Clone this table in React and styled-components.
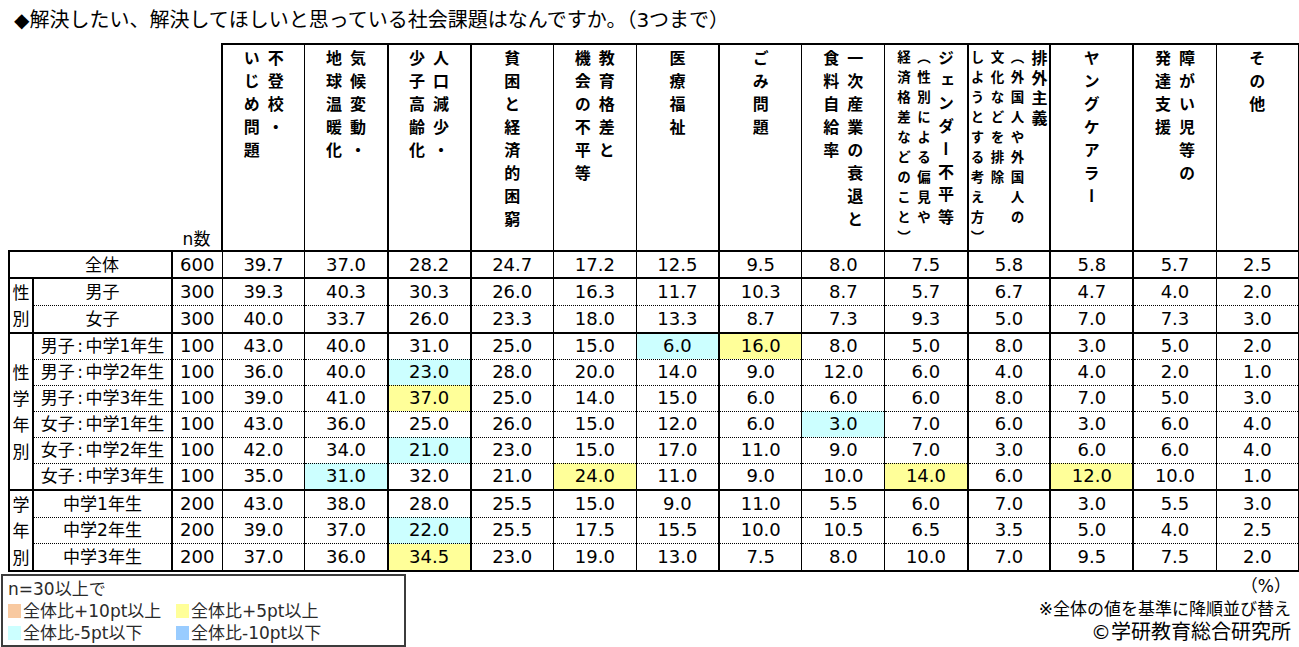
import React from 'react'
import styled, { createGlobalStyle } from 'styled-components'

const GlobalStyle = createGlobalStyle`
  html, body {
    margin: 0;
    padding: 0;
    background: #fff;
  }
  body {
    font-family: "DejaVu Sans", "Noto Sans CJK JP", sans-serif;
    color: #000;
  }
`

const THICK = '2px solid #000'
const THIN = '1px solid #000'
const DOT = '1px dotted #000'

const tones = {
  up10: '#f8c9a0',
  up5: '#ffff99',
  down5: '#ccffff',
  down10: '#99ccff',
}

// 横書きに直すと: 不登校・いじめ問題 など。lines は右の行から順に
const columns = [
  { key: 'futoko', thick: false, lines: [{ t: '不登校・' }, { t: 'いじめ問題' }] },
  { key: 'kiko', thick: true, lines: [{ t: '気候変動・' }, { t: '地球温暖化' }] },
  { key: 'jinko', thick: true, lines: [{ t: '人口減少・' }, { t: '少子高齢化' }] },
  { key: 'hinkon', thick: false, lines: [{ t: '貧困と経済的困窮' }] },
  { key: 'kyoiku', thick: false, lines: [{ t: '教育格差と' }, { t: '機会の不平等' }] },
  { key: 'iryo', thick: true, lines: [{ t: '医療福祉' }] },
  { key: 'gomi', thick: false, lines: [{ t: 'ごみ問題' }] },
  { key: 'ichiji', thick: false, lines: [{ t: '一次産業の衰退と' }, { t: '食料自給率' }] },
  {
    key: 'gender',
    thick: true,
    lines: [
      { t: 'ジェンダー不平等', pitch: 22.7 },
      { t: '（性別による偏見や', small: true },
      { t: '経済格差などのこと）', small: true },
    ],
  },
  {
    key: 'haigai',
    thick: true,
    lines: [
      { t: '排外主義', pitch: 20, w: 23 },
      { t: '（外国人や外国人の', small: true },
      { t: '文化などを排除', small: true },
      { t: 'しようとする考え方）', small: true },
    ],
  },
  { key: 'young', thick: true, lines: [{ t: 'ヤングケアラー' }] },
  { key: 'shogai', thick: false, lines: [{ t: '障がい児等の' }, { t: '発達支援' }] },
  { key: 'other', thick: true, lines: [{ t: 'その他' }] },
]

const total = [39.7, 37.0, 28.2, 24.7, 17.2, 12.5, 9.5, 8.0, 7.5, 5.8, 5.8, 5.7, 2.5]

const groups = [
  { cat: null, rows: [{ label: '全体', n: 600, v: total }] },
  {
    cat: '性別',
    rows: [
      { label: '男子', n: 300, v: [39.3, 40.3, 30.3, 26.0, 16.3, 11.7, 10.3, 8.7, 5.7, 6.7, 4.7, 4.0, 2.0] },
      { label: '女子', n: 300, v: [40.0, 33.7, 26.0, 23.3, 18.0, 13.3, 8.7, 7.3, 9.3, 5.0, 7.0, 7.3, 3.0] },
    ],
  },
  {
    cat: '性学年別',
    rows: [
      { sex: '男子', label: '中学1年生', n: 100, v: [43.0, 40.0, 31.0, 25.0, 15.0, 6.0, 16.0, 8.0, 5.0, 8.0, 3.0, 5.0, 2.0] },
      { sex: '男子', label: '中学2年生', n: 100, v: [36.0, 40.0, 23.0, 28.0, 20.0, 14.0, 9.0, 12.0, 6.0, 4.0, 4.0, 2.0, 1.0] },
      { sex: '男子', label: '中学3年生', n: 100, v: [39.0, 41.0, 37.0, 25.0, 14.0, 15.0, 6.0, 6.0, 6.0, 8.0, 7.0, 5.0, 3.0] },
      { sex: '女子', label: '中学1年生', n: 100, v: [43.0, 36.0, 25.0, 26.0, 15.0, 12.0, 6.0, 3.0, 7.0, 6.0, 3.0, 6.0, 4.0] },
      { sex: '女子', label: '中学2年生', n: 100, v: [42.0, 34.0, 21.0, 23.0, 15.0, 17.0, 11.0, 9.0, 7.0, 3.0, 6.0, 6.0, 4.0] },
      { sex: '女子', label: '中学3年生', n: 100, v: [35.0, 31.0, 32.0, 21.0, 24.0, 11.0, 9.0, 10.0, 14.0, 6.0, 12.0, 10.0, 1.0] },
    ],
  },
  {
    cat: '学年別',
    rows: [
      { label: '中学1年生', n: 200, v: [43.0, 38.0, 28.0, 25.5, 15.0, 9.0, 11.0, 5.5, 6.0, 7.0, 3.0, 5.5, 3.0] },
      { label: '中学2年生', n: 200, v: [39.0, 37.0, 22.0, 25.5, 17.5, 15.5, 10.0, 10.5, 6.5, 3.5, 5.0, 4.0, 2.5] },
      { label: '中学3年生', n: 200, v: [37.0, 36.0, 34.5, 23.0, 19.0, 13.0, 7.5, 8.0, 10.0, 7.0, 9.5, 7.5, 2.0] },
    ],
  },
]

const toneOf = (value, base, n) => {
  if (n < 30) return null
  const diff = Math.round((value - base) * 10) / 10
  if (diff >= 10) return 'up10'
  if (diff >= 5) return 'up5'
  if (diff <= -10) return 'down10'
  if (diff <= -5) return 'down5'
  return null
}

const Page = styled.div`
  width: 1299px;
`

const Title = styled.h1`
  margin: 0;
  padding-left: 14px;
  height: 43px;
  line-height: 41px;
  font-size: 20px;
  font-weight: 400;
  white-space: nowrap;
`

const Table = styled.table`
  margin-left: 8px;
  width: 1290px;
  table-layout: fixed;
  border-collapse: collapse;
`

const Col = styled.col`
  width: ${(p) => p.$w}px;
`

const BlankHead = styled.th`
  padding: 0;
  border: none;
`

const NHead = styled.th`
  padding: 0 0 1px;
  border: none;
  vertical-align: bottom;
  text-align: center;
  font-size: 17px;
  font-weight: 400;
  line-height: 20px;
`

const HeadCell = styled.th`
  height: 197px;
  padding: 5px 0 0;
  vertical-align: top;
  font-weight: 400;
  border-top: ${THICK};
  border-bottom: ${THICK};
  border-left: ${(p) => (p.$first ? THICK : 'none')};
  border-right: ${(p) => (p.$thick ? THICK : THIN)};
`

const HeadStack = styled.div`
  display: flex;
  flex-direction: row-reverse;
  justify-content: center;
  align-items: flex-start;
`

const HeadLine = styled.span`
  writing-mode: vertical-rl;
  white-space: nowrap;
  font-family: "Noto Sans CJK JP", sans-serif;
  font-weight: 700;
  font-size: ${(p) => (p.$small ? 13.5 : 16)}px;
  line-height: ${(p) => p.$w}px;
  letter-spacing: ${(p) => p.$gap}px;
`

const Cell = styled.td`
  height: 25px;
  padding: 0;
  text-align: center;
  vertical-align: middle;
  font-size: 18px;
  line-height: 20px;
  white-space: nowrap;
  background: ${(p) => tones[p.$tone] || 'transparent'};
  border-top: ${(p) => (p.$top === 'thick' ? THICK : DOT)};
  border-bottom: ${(p) => (p.$last ? THICK : 'none')};
  border-right: ${(p) => (p.$right === 'thick' ? THICK : THIN)};
  border-left: ${(p) => (p.$edge ? THICK : 'none')};
`

const LabelCell = styled(Cell)`
  font-size: 17px;
  padding-left: ${(p) => (p.$shift ? 23 : 0)}px;
`

const CatCell = styled.td`
  padding: 0;
  text-align: center;
  vertical-align: middle;
  font-family: "Noto Sans CJK JP", sans-serif;
  font-size: 17px;
  border-top: ${THICK};
  border-bottom: ${(p) => (p.$last ? THICK : 'none')};
  border-left: ${THICK};
  border-right: ${THICK};
`

const CatChar = styled.span`
  display: block;
  line-height: 26.4px;
`

const Colon = styled.span`
  margin: 0 2.5px;
`

const Footer = styled.div`
  display: flex;
  justify-content: space-between;
  align-items: flex-start;
`

const Legend = styled.div`
  margin: 2px 0 0 1px;
  width: 396px;
  height: 67px;
  padding: 2px 0 0 5px;
  box-sizing: content-box;
  border: 2px solid #3c3c3c;
  color: #2a2a2a;
  font-size: 17px;
  line-height: 22px;
`

const LegendGrid = styled.div`
  display: grid;
  grid-template-columns: 168px auto;
`

const LegendItem = styled.div`
  display: flex;
  align-items: center;
  white-space: nowrap;
`

const Swatch = styled.span`
  width: 13px;
  height: 14px;
  margin-right: 2px;
  background: ${(p) => tones[p.$tone]};
`

const Notes = styled.div`
  margin-top: 3px;
  padding-right: 8px;
  text-align: right;
  white-space: nowrap;
`

const Note = styled.div`
  font-size: ${(p) => p.$size}px;
  line-height: ${(p) => p.$lh}px;
`

const dataWidth = (1290 - 24 - 139 - 50) / columns.length

const HeaderRow = () => (
  <tr>
    <BlankHead />
    <BlankHead />
    <NHead>n数</NHead>
    {columns.map((c, i) => (
      <HeadCell key={c.key} $first={i === 0} $thick={c.thick}>
        <HeadStack>
          {c.lines.map((l) => {
            const size = l.small ? 13.5 : 16
            const pitch = l.pitch || (l.small ? 20 : 23)
            const w = l.w || (l.small ? 20 : 24)
            return (
              <HeadLine key={l.t} $small={l.small} $w={w} $gap={pitch - size}>
                {l.t}
              </HeadLine>
            )
          })}
        </HeadStack>
      </HeadCell>
    ))}
  </tr>
)

const BodyRows = () =>
  groups.flatMap((g, gi) =>
    g.rows.map((r, ri) => {
      const top = ri === 0 ? 'thick' : 'dot'
      const last = gi === groups.length - 1 && ri === g.rows.length - 1
      const isTotal = g.cat === null
      return (
        <tr key={`${gi}-${ri}`}>
          {isTotal && (
            <LabelCell colSpan={2} $top={top} $right="thick" $edge $shift>
              {r.label}
            </LabelCell>
          )}
          {!isTotal && ri === 0 && (
            <CatCell rowSpan={g.rows.length} $last={gi === groups.length - 1}>
              {g.cat.split('').map((ch, k) => (
                <CatChar key={k}>{ch}</CatChar>
              ))}
            </CatCell>
          )}
          {!isTotal && (
            <LabelCell $top={top} $right="thick" $last={last}>
              {r.sex && (
                <>
                  {r.sex}
                  <Colon>:</Colon>
                </>
              )}
              {r.label}
            </LabelCell>
          )}
          <Cell $top={top} $right="thin" $last={last}>
            {r.n}
          </Cell>
          {r.v.map((v, i) => (
            <Cell
              key={columns[i].key}
              $top={top}
              $right={columns[i].thick ? 'thick' : 'thin'}
              $last={last}
              $tone={isTotal ? null : toneOf(v, total[i], r.n)}
            >
              {v.toFixed(1)}
            </Cell>
          ))}
        </tr>
      )
    })
  )

const App = () => (
  <Page>
    <GlobalStyle />
    <Title>◆解決したい、解決してほしいと思っている社会課題はなんですか。（3つまで）</Title>
    <Table>
      <colgroup>
        <Col $w={24} />
        <Col $w={139} />
        <Col $w={50} />
        {columns.map((c) => (
          <Col key={c.key} $w={dataWidth} />
        ))}
      </colgroup>
      <thead>
        <HeaderRow />
      </thead>
      <tbody>
        <BodyRows />
      </tbody>
    </Table>
    <Footer>
      <Legend>
        <div>n=30以上で</div>
        <LegendGrid>
          <LegendItem>
            <Swatch $tone="up10" />
            全体比+10pt以上
          </LegendItem>
          <LegendItem>
            <Swatch $tone="up5" />
            全体比+5pt以上
          </LegendItem>
          <LegendItem>
            <Swatch $tone="down5" />
            全体比-5pt以下
          </LegendItem>
          <LegendItem>
            <Swatch $tone="down10" />
            全体比-10pt以下
          </LegendItem>
        </LegendGrid>
      </Legend>
      <Notes>
        <Note $size={17} $lh={22}>（%）</Note>
        <Note $size={17} $lh={24}>※全体の値を基準に降順並び替え</Note>
        <Note $size={20} $lh={23}>©学研教育総合研究所</Note>
      </Notes>
    </Footer>
  </Page>
)

export default App
